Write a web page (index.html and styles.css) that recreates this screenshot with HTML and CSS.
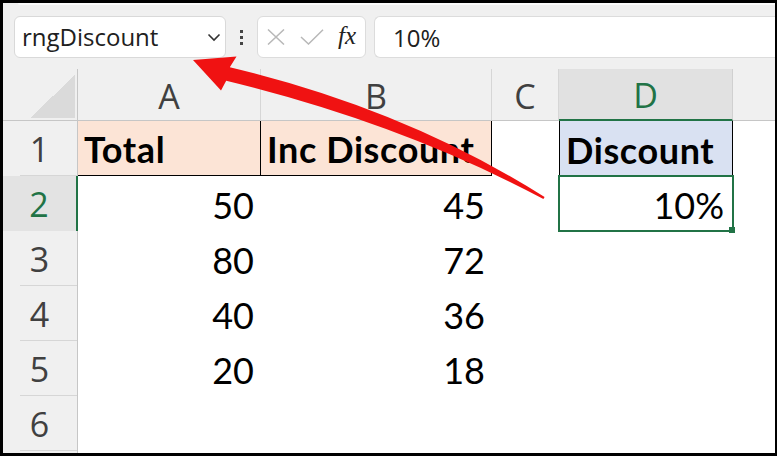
FILE: index.html
```html
<!DOCTYPE html>
<html>
<head>
<meta charset="utf-8">
<title>rngDiscount</title>
<link rel="stylesheet" href="styles.css">
</head>
<body>
<div class="frame">
  <div class="ribbon-edge"></div>
  <div class="toolbar">
    <div class="namebox">
      <span class="nb-text">rngDiscount</span>
      <svg class="chev" width="14" height="9" viewBox="0 0 14 9"><path d="M1.5 1.5 L7 7 L12.5 1.5" fill="none" stroke="#333" stroke-width="1.6"/></svg>
    </div>
    <div class="dots"><i></i><i></i><i></i></div>
    <div class="fxbox">
      <svg class="ico-x" width="18" height="16" viewBox="0 0 18 16"><path d="M1 0.5 L17 15.5 M17 0.5 L1 15.5" fill="none" stroke="#b8b8b8" stroke-width="1.5"/></svg>
      <svg class="ico-ok" width="24" height="16" viewBox="0 0 24 16"><path d="M1 8 L8.5 15 L23 0.8" fill="none" stroke="#b8b8b8" stroke-width="1.5"/></svg>
      <span class="fx">fx</span>
    </div>
    <div class="formula">10%</div>
  </div>
  <div class="sheet">
    <div class="corner"><div class="tri"></div></div>
    <div class="colh">A</div>
    <div class="colh">B</div>
    <div class="colh">C</div>
    <div class="colh sel">D</div>
    <div class="colh last"></div>

    <div class="rowh">1</div>
    <div class="cell hdr peach">Total</div>
    <div class="cell hdr peach">Inc Discount</div>
    <div class="cell"></div>
    <div class="cell hdr blue">Discount</div>
    <div class="cell"></div>

    <div class="rowh sel">2</div>
    <div class="cell num">50</div>
    <div class="cell num">45</div>
    <div class="cell"></div>
    <div class="cell num active">10%</div>
    <div class="cell"></div>

    <div class="rowh">3</div>
    <div class="cell num">80</div>
    <div class="cell num">72</div>
    <div class="cell"></div>
    <div class="cell"></div>
    <div class="cell"></div>

    <div class="rowh">4</div>
    <div class="cell num">40</div>
    <div class="cell num">36</div>
    <div class="cell"></div>
    <div class="cell"></div>
    <div class="cell"></div>

    <div class="rowh">5</div>
    <div class="cell num">20</div>
    <div class="cell num">18</div>
    <div class="cell"></div>
    <div class="cell"></div>
    <div class="cell"></div>

    <div class="rowh">6</div>
    <div class="cell"></div>
    <div class="cell"></div>
    <div class="cell"></div>
    <div class="cell"></div>
    <div class="cell"></div>

    <div class="rowh tail"></div>
    <div class="cell blank"></div>
    <div class="cell blank"></div>
    <div class="cell blank"></div>
    <div class="cell blank"></div>
    <div class="cell blank"></div>
  </div>
  <svg class="arrow" width="777" height="456" viewBox="0 0 777 456">
    <path d="M193 60 L236.5 56.5 L229.8 67.2 Q405.5 109 544.6 197 L543.4 199 Q400.5 123 226.2 80.8 L221 90.5 Z" fill="#f01212"/>
  </svg>
</div>
</body>
</html>
```
FILE: styles.css
```css
* { box-sizing: border-box; margin: 0; padding: 0; }
html, body { width: 777px; height: 456px; overflow: hidden; background: #000; }

.frame {
  width: 777px;
  height: 456px;
  border: 3px solid #000;
  border-right-width: 2px;
  background: #f0f0f0;
  position: relative;
  overflow: hidden;
  display: flex;
  flex-direction: column;
}

.ribbon-edge {
  height: 2px;
  flex-shrink: 0;
  margin-left: 15px;
  background: #fbfbfb;
  border-bottom-left-radius: 3px;
}

.toolbar {
  height: 64px;
  display: flex;
  align-items: flex-start;
  padding: 11px 0 0 11px;
  flex-shrink: 0;
}

.namebox {
  width: 212px;
  height: 42px;
  background: #fff;
  border: 1px solid #d9d9d9;
  border-radius: 6px;
  display: flex;
  align-items: center;
  padding: 0 4px 0 7px;
  font: 24px "Open Sans", "Noto Sans", sans-serif;
  color: #202020;
}
.nb-text { flex: 1; position: relative; top: -1px; }
.chev { display: block; }

.dots {
  width: 31px;
  height: 42px;
  display: flex;
  flex-direction: column;
  align-items: center;
  justify-content: center;
  gap: 3px;
}
.dots i { display: block; width: 3px; height: 3px; background: #444; }

.fxbox {
  width: 109px;
  height: 42px;
  background: #fff;
  border: 1px solid #dcdcdc;
  border-radius: 6px;
  display: flex;
  align-items: center;
  padding-left: 9px;
}
.ico-x { display: block; margin-right: 15px; }
.ico-ok { display: block; margin-right: 14px; }
.fx {
  font: italic 25px "Liberation Serif", "DejaVu Serif", serif;
  color: #222;
  position: relative;
  top: -1px;
}

.formula {
  flex: 1;
  height: 42px;
  margin-left: 8px;
  background: #fff;
  border: 1px solid #dcdcdc;
  border-right: none;
  border-radius: 6px 0 0 6px;
  display: flex;
  align-items: center;
  padding-left: 18px;
  font: 24px "Open Sans", "Noto Sans", sans-serif;
  color: #202020;
}

.sheet {
  flex: 1;
  min-height: 0;
  overflow: hidden;
  display: grid;
  grid-template-columns: 75px 183px 231px 67px 174px 1fr;
  grid-template-rows: 52px repeat(6, 55px) minmax(0, 1fr);
  background: #fff;
}

.corner {
  background: #f0f0f0;
  border-right: 1px solid #c6c6c6;
  border-bottom: 1px solid #c6c6c6;
  display: flex;
  justify-content: flex-end;
  align-items: flex-end;
  padding: 0 2px 2px 0;
}
.tri {
  width: 45px;
  height: 43px;
  background: linear-gradient(to bottom right, transparent 50%, #dadada 50%);
}

.colh {
  background: #f0f0f0;
  border-right: 1px solid #d6d6d6;
  border-bottom: 1px solid #c6c6c6;
  display: flex;
  align-items: center;
  justify-content: center;
  font: 34px "Open Sans", "Noto Sans", sans-serif;
  color: #404040;
  padding-top: 2px;
}
.colh.sel {
  background: #e1e1e1;
  color: #217346;
  border-bottom: 2px solid #217346;
  border-right-color: #d0d0d0;
}
.colh.last { border-right: none; }

.rowh {
  background: #f0f0f0 linear-gradient(#d6d6d6, #d6d6d6) no-repeat right bottom / 57px 1px;
  border-right: 1px solid #c6c6c6;
  display: flex;
  align-items: center;
  justify-content: center;
  font: 34px "Open Sans", "Noto Sans", sans-serif;
  color: #404040;
  padding-right: 1px;
}
.rowh.sel {
  background: #e3e3e3;
  color: #217346;
  border-right: 2px solid #217346;
}
.rowh.tail { background: #f0f0f0; }

.cell {
  background: #fff;
  display: flex;
  align-items: flex-end;
  padding: 0 7px 8px 7px;
  font: 36px "Lato", "Carlito", sans-serif;
  color: #000;
  line-height: 36px;
  white-space: nowrap;
  min-height: 0;
}
.cell.blank { padding: 0; }
.cell.hdr { font-weight: 700; letter-spacing: 0.6px; }
.cell.num { justify-content: flex-end; }
.cell.peach {
  background: #fce4d6;
  border-right: 1px solid #000;
  border-bottom: 1px solid #000;
  padding-left: 6px;
}
.cell.blue {
  background: #d9e1f2;
  border-left: 1px solid #000;
  border-right: 1px solid #000;
  padding-left: 6px;
}
.cell.active { position: relative; padding-right: 9px; }
.cell.active::after {
  content: "";
  position: absolute;
  left: -1px;
  top: -1px;
  right: -1px;
  bottom: -1px;
  border: 2px solid #217346;
}
.cell.active::before {
  content: "";
  position: absolute;
  right: -2px;
  bottom: -2px;
  width: 6px;
  height: 6px;
  background: #217346;
  z-index: 1;
}

.arrow {
  position: absolute;
  top: -3px;
  left: -3px;
  pointer-events: none;
}
```
